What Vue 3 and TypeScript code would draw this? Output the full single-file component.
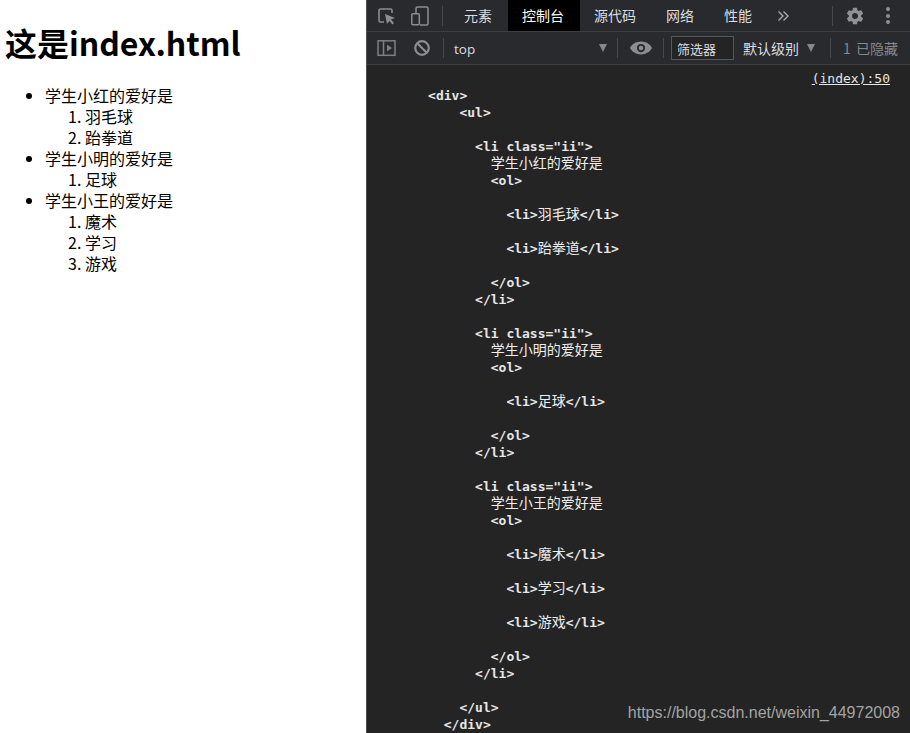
<script setup lang="ts">
const rawLines: string[] = [
  '        <div>',
  '            <ul>',
  '',
  '              <li class="ii">',
  '                学生小红的爱好是',
  '                <ol>',
  '',
  '                  <li>羽毛球</li>',
  '',
  '                  <li>跆拳道</li>',
  '',
  '                </ol>',
  '              </li>',
  '',
  '              <li class="ii">',
  '                学生小明的爱好是',
  '                <ol>',
  '',
  '                  <li>足球</li>',
  '',
  '                </ol>',
  '              </li>',
  '',
  '              <li class="ii">',
  '                学生小王的爱好是',
  '                <ol>',
  '',
  '                  <li>魔术</li>',
  '',
  '                  <li>学习</li>',
  '',
  '                  <li>游戏</li>',
  '',
  '                </ol>',
  '              </li>',
  '',
  '            </ul>',
  '          </div>',
]

interface Seg { text: string; cjk: boolean }
const lines: Seg[][] = rawLines.map((l) =>
  (l.match(/[\u4e00-\u9fff]+|[^\u4e00-\u9fff]+/g) ?? []).map((text) => ({
    text,
    cjk: /[\u4e00-\u9fff]/.test(text),
  })),
)

const students = [
  { name: '学生小红的爱好是', hobbies: ['羽毛球', '跆拳道'] },
  { name: '学生小明的爱好是', hobbies: ['足球'] },
  { name: '学生小王的爱好是', hobbies: ['魔术', '学习', '游戏'] },
]
</script>

<template>
  <div class="page">
    <main class="doc">
      <h1>这是index.html</h1>
      <ul>
        <li v-for="s in students" :key="s.name">
          {{ s.name }}
          <ol>
            <li v-for="h in s.hobbies" :key="h">{{ h }}</li>
          </ol>
        </li>
      </ul>
    </main>
    <section class="devtools">
      <div class="bar tabs">
        <svg class="ic first" width="20" height="20" viewBox="0 0 20 20" fill="none" stroke="#8a8d91" stroke-width="1.6">
          <path d="M7 16H3.5A1.5 1.5 0 0 1 2 14.5v-10A1.5 1.5 0 0 1 3.5 3h10A1.5 1.5 0 0 1 15 4.5V7" />
          <path d="M8 8l10 4-4 1.5 3 3.5-1.6 1.4-3-3.5L10 18z" fill="#8a8d91" stroke="none" />
        </svg>
        <svg class="ic second" width="20" height="20" viewBox="0 0 20 20" fill="none" stroke="#8a8d91" stroke-width="1.5">
          <path d="M6 7V2.5A1.5 1.5 0 0 1 7.500 1h9A1.500 1.500 0 0 1 18 2.500v15a1.500 1.500 0 0 1-1.500 1.500H10" />
          <rect x="1.800" y="7.800" width="7.500" height="11" rx="1" />
        </svg>
        <span class="sep tab-sep"></span>
        <span class="tab">元素</span>
        <span class="tab active">控制台</span>
        <span class="tab">源代码</span>
        <span class="tab">网络</span>
        <span class="tab">性能</span>
        <svg class="more" width="12" height="12" viewBox="0 0 12 12" fill="none" stroke="#a9abae" stroke-width="1.400">
          <path d="M1.500 1.500 6 6l-4.500 4.500M6.500 1.500 11 6l-4.500 4.500" />
        </svg>
        <span class="grow"></span>
        <span class="sep end-sep"></span>
        <svg class="gear" width="20" height="20" viewBox="0 0 24 24" fill="#8f9296">
          <path d="M19.430 12.980a7.800 7.800 0 0 0 0-1.960l2.110-1.650a.5.5 0 0 0 .12-.64l-2-3.460a.5.5 0 0 0-.61-.22l-2.490 1a7.300 7.300 0 0 0-1.690-.98l-.38-2.650A.49.49 0 0 0 14 2h-4a.49.49 0 0 0-.49.420l-.38 2.650a7.700 7.700 0 0 0-1.690.98l-2.490-1a.5.5 0 0 0-.61.220l-2 3.460a.49.49 0 0 0 .12.640l2.110 1.650a7.900 7.900 0 0 0 0 1.960l-2.110 1.650a.5.5 0 0 0-.12.640l2 3.460c.12.220.39.300.61.220l2.490-1c.52.400 1.080.730 1.690.980l.38 2.650c.03.240.24.420.49.420h4c.25 0 .46-.180.49-.420l.38-2.650a7.700 7.700 0 0 0 1.690-.98l2.490 1c.23.090.49 0 .61-.22l2-3.460a.5.5 0 0 0-.12-.64zM12 15.500a3.500 3.500 0 1 1 0-7 3.500 3.500 0 0 1 0 7z" />
        </svg>
        <span class="dots"><i></i><i></i><i></i></span>
      </div>
      <div class="bar filters">
        <svg class="ic panel" width="20" height="18" viewBox="0 0 20 18" fill="none" stroke="#7d8084" stroke-width="1.500">
          <rect x="1" y="1.800" width="17" height="14.500" />
          <path d="M6.500 1.800v14.500" />
          <path d="M10 5.800l5 3.200-5 3.200z" fill="#7d8084" stroke="none" />
        </svg>
        <svg class="ic block" width="18" height="18" viewBox="0 0 18 18" fill="none" stroke="#8a8d91" stroke-width="2.200">
          <circle cx="9" cy="9" r="6.800" />
          <path d="M4.200 4.200l9.600 9.600" />
        </svg>
        <span class="sep top-sep"></span>
        <span class="context">top</span>
        <span class="caret context-caret"></span>
        <span class="sep"></span>
        <svg class="eye" width="22" height="16" viewBox="0 0 24 16" fill="#8a8d91">
          <path fill-rule="evenodd" d="M12 1C6.500 1 2 4 0 8c2 4 6.500 7 12 7s10-3 12-7c-2-4-6.500-7-12-7zm0 11.500a4.500 4.500 0 1 1 0-9 4.500 4.500 0 0 1 0 9zM12 5.500a2.500 2.500 0 1 0 0 5 2.500 2.500 0 0 0 0-5z" />
        </svg>
        <span class="sep"></span>
        <span class="filter-input">筛选器</span>
        <span class="level">默认级别</span>
        <span class="caret level-caret"></span>
        <span class="sep"></span>
        <span class="hidden-count">1 已隐藏</span>
      </div>
      <div class="console">
        <div class="source"><span>(index):50</span></div>
        <div v-for="(line, i) in lines" :key="i" class="line"><span v-for="(seg, j) in line" :key="j" :class="{ cjk: seg.cjk }">{{ seg.text }}</span></div>
      </div>
      <div class="watermark">https://blog.csdn.net/weixin_44972008</div>
    </section>
  </div>
</template>

<style>
html, body { margin: 0; overflow: hidden; background: #fff; }
</style>

<style scoped>
.page {
  display: flex;
  width: 910px;
  height: 733px;
  overflow: hidden;
  font-family: "Noto Sans CJK SC", "Open Sans", sans-serif;
}
.doc {
  width: 366px;
  flex: none;
  padding-left: 5px;
  box-sizing: border-box;
  color: #000;
  font-size: 16px;
  line-height: 21px;
}
.doc h1 {
  margin: 20px 0 21px;
  font-size: 32px;
  line-height: 44px;
  font-weight: 700;
}
.doc ul, .doc ol { margin: 0; padding-left: 40px; }
.devtools {
  position: relative;
  flex: 1;
  min-width: 0;
  display: flex;
  flex-direction: column;
  background: #242424;
  border-left: 1px solid #4a4c50;
  overflow: hidden;
}
.bar {
  display: flex;
  align-items: center;
  flex: none;
  background: #292a2d;
  border-bottom: 1px solid #3d3e40;
  color: #dcdde0;
  font-size: 14px;
  box-sizing: border-box;
}
.tabs { height: 32px; align-items: stretch; }
.tabs > svg, .tabs > .sep, .tabs > .dots { align-self: center; }
.filters { height: 33px; }
.ic { flex: none; }
.first { margin-left: 10px; }
.second { margin-left: 13px; }
.sep {
  flex: none;
  width: 1px;
  height: 20px;
  background: #45474a;
}
.tab-sep { margin-left: 12px; margin-right: 7px; }
.tab {
  display: flex;
  align-items: center;
  padding: 0 16px 0 14px;
  line-height: 31px;
}
.tab.active { background: #000; color: #fff; }
.more { margin-left: 9px; margin-top: 1px; }
.grow { flex: 1; }
.end-sep { margin-right: 12px; }
.gear { flex: none; align-self: center; margin-right: 21px; }
.dots {
  display: flex;
  flex-direction: column;
  gap: 2.500px;
  margin-right: 20px;
}
.dots i {
  display: block;
  width: 4px;
  height: 4px;
  border-radius: 50%;
  background: #8f9296;
}
.panel { margin-left: 10px; }
.block { margin-left: 16px; }
.top-sep { margin-left: 12px; }
.context {
  margin: 1px 0 0 10px;
  width: 145px;
  font: 13.500px "Open Sans", sans-serif;
}
.caret {
  flex: none;
  width: 0;
  height: 0;
  border-left: 4.500px solid transparent;
  border-right: 4.500px solid transparent;
  border-top: 8px solid #85888c;
}
.context-caret { margin-right: 10px; }
.eye { flex: none; margin: 0 11px 0 12px; }
.filter-input {
  margin-left: 7px;
  width: 63px;
  height: 24px;
  box-sizing: border-box;
  border: 1px solid #55575a;
  padding-left: 5px;
  font-size: 13px;
  line-height: 24px;
  background: #242424;
}
.level { margin-left: 9px; font-size: 14px; }
.level-caret { margin: 0 15px 0 8px; }
.hidden-count {
  margin-left: 12px;
  color: #85888c;
  font-size: 14px;
  word-spacing: 2px;
  white-space: nowrap;
}
.console {
  flex: 1;
  padding-top: 5px;
  color: #e6e6e6;
  font: 700 13px/17px "DejaVu Sans Mono", "Noto Sans CJK SC", monospace;
}
.source {
  height: 17px;
  padding-right: 20px;
  text-align: right;
  text-decoration: underline;
  font-weight: 400;
}
.line { height: 17px; margin-left: -1.500px; white-space: pre; }
.cjk {
  font: 400 14px/1 "Noto Sans CJK SC", sans-serif;
  color: #eee;
}
.watermark {
  position: absolute;
  right: 10px;
  bottom: 10px;
  color: #a3a3a3;
  font: 16px/20px "Liberation Sans", sans-serif;
}
</style>
